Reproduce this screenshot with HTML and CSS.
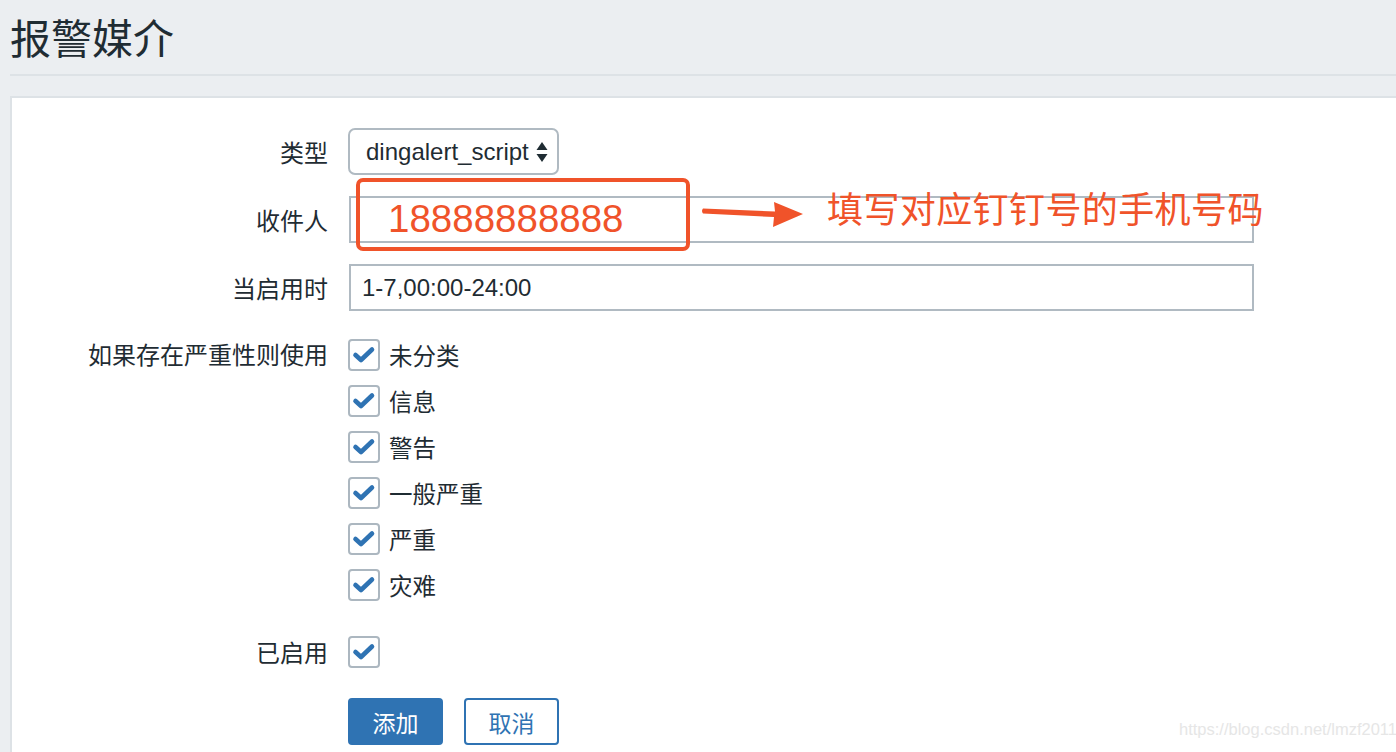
FILE: index.html
```html
<!DOCTYPE html>
<html lang="zh">
<head>
<meta charset="utf-8">
<title>报警媒介</title>
<link rel="stylesheet" href="styles.css">
</head>
<body>
<div class="page">
  <header class="header">
    <h1 class="title">报警媒介</h1>
  </header>
  <div class="divider"></div>
  <section class="panel">
    <form class="form">
      <div class="label">类型</div>
      <div class="control">
        <div class="select">
          <span>dingalert_script</span>
          <svg class="arrows" width="12" height="22" viewBox="0 0 12 22"><path d="M6 1 L11.5 9 H0.5 Z M0.5 13 H11.5 L6 21 Z" fill="#1f2c33"/></svg>
        </div>
      </div>

      <div class="label">收件人</div>
      <div class="control">
        <div class="input wide"></div>
      </div>

      <div class="label">当启用时</div>
      <div class="control">
        <div class="input wide">1-7,00:00-24:00</div>
      </div>

      <div class="label label-top">如果存在严重性则使用</div>
      <div class="control">
        <ul class="checklist">
          <li class="check-item"><span class="box"><svg width="28" height="28" viewBox="0 0 28 28"><path d="M5.5 14 L11 19 L22 8.5" fill="none" stroke="#2f73b3" stroke-width="4.6" stroke-linecap="round" stroke-linejoin="round"/></svg></span>未分类</li>
          <li class="check-item"><span class="box"><svg width="28" height="28" viewBox="0 0 28 28"><path d="M5.5 14 L11 19 L22 8.5" fill="none" stroke="#2f73b3" stroke-width="4.6" stroke-linecap="round" stroke-linejoin="round"/></svg></span>信息</li>
          <li class="check-item"><span class="box"><svg width="28" height="28" viewBox="0 0 28 28"><path d="M5.5 14 L11 19 L22 8.5" fill="none" stroke="#2f73b3" stroke-width="4.6" stroke-linecap="round" stroke-linejoin="round"/></svg></span>警告</li>
          <li class="check-item"><span class="box"><svg width="28" height="28" viewBox="0 0 28 28"><path d="M5.5 14 L11 19 L22 8.5" fill="none" stroke="#2f73b3" stroke-width="4.6" stroke-linecap="round" stroke-linejoin="round"/></svg></span>一般严重</li>
          <li class="check-item"><span class="box"><svg width="28" height="28" viewBox="0 0 28 28"><path d="M5.5 14 L11 19 L22 8.5" fill="none" stroke="#2f73b3" stroke-width="4.6" stroke-linecap="round" stroke-linejoin="round"/></svg></span>严重</li>
          <li class="check-item"><span class="box"><svg width="28" height="28" viewBox="0 0 28 28"><path d="M5.5 14 L11 19 L22 8.5" fill="none" stroke="#2f73b3" stroke-width="4.6" stroke-linecap="round" stroke-linejoin="round"/></svg></span>灾难</li>
        </ul>
      </div>

      <div class="label row-enabled">已启用</div>
      <div class="control row-enabled">
        <span class="box"><svg width="28" height="28" viewBox="0 0 28 28"><path d="M5.5 14 L11 19 L22 8.5" fill="none" stroke="#2f73b3" stroke-width="4.6" stroke-linecap="round" stroke-linejoin="round"/></svg></span>
      </div>

      <div class="label row-buttons"></div>
      <div class="control buttons row-buttons">
        <button type="button" class="btn btn-primary">添加</button>
        <button type="button" class="btn btn-alt">取消</button>
      </div>
    </form>
  </section>

  <div class="annot-box"><span class="annot-number">18888888888</span></div>
  <svg class="annot-arrow" width="104" height="30" viewBox="0 0 104 30"><path d="M2 9.5 L74 12.5 L73 3 L102 15 L72 28 L73 18 L2 14.5 Q0 12 2 9.5 Z" fill="#f0532a"/></svg>
  <div class="annot-text">填写对应钉钉号的手机号码</div>
  <div class="watermark">https://blog.csdn.net/lmzf2011</div>
</div>
</body>
</html>
```

FILE: styles.css
```css
html, body {
  margin: 0;
  padding: 0;
}
body {
  background: #ebeef1;
  font-family: "Liberation Sans", "Noto Sans CJK SC", sans-serif;
  color: #1f2c33;
  width: 1396px;
  height: 752px;
  overflow: hidden;
}
.page {
  position: relative;
  height: 752px;
  overflow: hidden;
}
.header {
  padding: 0 0 0 10px;
  height: 74px;
  display: flex;
  align-items: center;
}
.title {
  margin: 0;
  font-family: "Noto Sans CJK SC", sans-serif;
  font-weight: 400;
  font-size: 41px;
  line-height: 1;
  color: #1f2c33;
  transform: translateY(-1px);
}
.divider {
  margin-left: 10px;
  height: 2px;
  background: #dde2e6;
}
.panel {
  margin: 20px 0 0 10px;
  background: #ffffff;
  border-left: 2px solid #dde2e6;
  border-top: 2px solid #dde2e6;
  height: 656px;
  box-sizing: border-box;
}
.form {
  display: grid;
  grid-template-columns: 316px 1fr;
  column-gap: 20px;
  row-gap: 21px;
  padding-top: 30px;
  align-items: center;
}
.label {
  text-align: right;
  font-family: "Noto Sans CJK SC", sans-serif;
  font-size: 24px;
  line-height: 30px;
  color: #1f2c33;
}
.label-top {
  align-self: start;
  padding-top: 7px;
}
.control {
  display: flex;
  align-items: center;
}
.row-enabled {
  margin-top: 7px;
}
.row-buttons {
  margin-top: 9px;
}
.select {
  box-sizing: border-box;
  height: 47px;
  width: 211px;
  border: 2px solid #b0bac2;
  border-radius: 7px;
  display: flex;
  align-items: center;
  justify-content: space-between;
  padding: 0 9px 0 16px;
  font-size: 24px;
  color: #1f2c33;
}
.arrows {
  display: block;
}
.input {
  box-sizing: border-box;
  height: 47px;
  border: 2px solid #b0bac2;
  display: flex;
  align-items: center;
  padding: 0 11px;
  font-size: 24px;
  color: #1f2c33;
  margin-left: 1px;
}
.wide {
  width: 905px;
}
.checklist {
  list-style: none;
  margin: 0;
  padding: 0;
}
.check-item {
  height: 46px;
  display: flex;
  align-items: center;
  font-family: "Noto Sans CJK SC", sans-serif;
  font-size: 23.5px;
  color: #1f2c33;
}
.box {
  box-sizing: border-box;
  width: 32px;
  height: 32px;
  border: 2px solid #acb7c0;
  border-radius: 4px;
  display: inline-flex;
  align-items: center;
  justify-content: center;
  margin-right: 9px;
  background: #fff;
}
.box svg {
  display: block;
}
.buttons {
  gap: 20px;
}
.btn {
  box-sizing: border-box;
  width: 95px;
  height: 47px;
  border-radius: 4px;
  font-family: "Noto Sans CJK SC", sans-serif;
  font-size: 23px;
  padding: 0;
  cursor: pointer;
}
.btn-primary {
  background: #2f73b3;
  border: 2px solid #2f73b3;
  color: #ffffff;
}
.btn-alt {
  background: #ffffff;
  border: 2px solid #2f73b3;
  color: #2f73b3;
  margin-left: 1px;
}

/* annotations overlaid on the screenshot */
.annot-box {
  position: absolute;
  left: 356px;
  top: 178px;
  width: 334px;
  height: 73px;
  box-sizing: border-box;
  border: 4px solid #f0532a;
  border-radius: 7px;
  display: flex;
  align-items: center;
  padding-left: 28px;
}
.annot-number {
  font-family: "Liberation Sans", sans-serif;
  font-size: 38.5px;
  color: #f0532a;
  transform: translateY(4px);
}
.annot-arrow {
  position: absolute;
  left: 701px;
  top: 199px;
}
.annot-text {
  position: absolute;
  left: 827px;
  top: 184px;
  font-family: "Noto Sans CJK SC", sans-serif;
  font-size: 36px;
  line-height: 46px;
  color: #f0532a;
  letter-spacing: 0.4px;
}
.watermark {
  position: absolute;
  left: 1179px;
  top: 720px;
  font-family: "Liberation Sans", sans-serif;
  font-size: 16.5px;
  color: #e6e6e6;
}
```
